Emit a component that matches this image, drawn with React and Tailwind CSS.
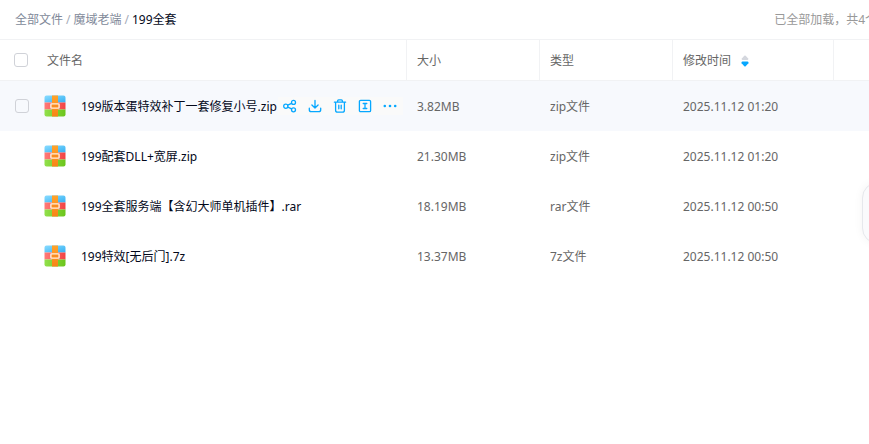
import React from "react";
import clsx from "clsx";

const files = [
  { name: "199版本蛋特效补丁一套修复小号.zip", size: "3.82MB", type: "zip文件", time: "2025.11.12 01:20", active: true },
  { name: "199配套DLL+宽屏.zip", size: "21.30MB", type: "zip文件", time: "2025.11.12 01:20" },
  { name: "199全套服务端【含幻大师单机插件】.rar", size: "18.19MB", type: "rar文件", time: "2025.11.12 00:50" },
  { name: "199特效[无后门].7z", size: "13.37MB", type: "7z文件", time: "2025.11.12 00:50" },
];

const actions = [
  { label: "分享", Icon: ShareIcon },
  { label: "下载", Icon: DownloadIcon },
  { label: "删除", Icon: TrashIcon },
  { label: "重命名", Icon: RenameIcon },
  { label: "更多", Icon: MoreIcon },
];

export default function App() {
  return (
    <div className="relative min-h-screen overflow-hidden bg-white font-['Noto_Sans','Noto_Sans_CJK_SC',sans-serif] text-xs">
      <header className="flex h-10 items-center justify-between border-b border-[#f1f2f4] pl-[15px]">
        <nav className="flex items-center gap-[3px] whitespace-nowrap text-[#818999]">
          <a href="#all">全部文件</a>
          <span className="text-[#a5abb8]">/</span>
          <a href="#parent">魔域老端</a>
          <span className="text-[#a5abb8]">/</span>
          <span className="text-[#03081a]">199全套</span>
        </nav>
        <span className="-mr-2 whitespace-nowrap text-[#999]">已全部加载，共4个</span>
      </header>

      <table className="w-full table-fixed border-separate border-spacing-0 text-left text-[#666]">
        <colgroup>
          <col />
          <col className="w-[133px]" />
          <col className="w-[133px]" />
          <col className="w-[161px]" />
          <col className="w-[35px]" />
        </colgroup>
        <thead>
          <tr className="h-[41px]">
            <th className="border-r border-b border-[#f1f2f4] pl-[14px] font-normal">
              <div className="flex items-center gap-[19px]">
                <Checkbox label="全选" />
                <span className="pt-0.5">文件名</span>
              </div>
            </th>
            <th className="border-r border-b border-[#f1f2f4] pt-0.5 pl-[10px] font-normal">大小</th>
            <th className="border-r border-b border-[#f1f2f4] pt-0.5 pl-[10px] font-normal">类型</th>
            <th className="border-r border-b border-[#f1f2f4] pt-0.5 pl-[10px] font-normal">
              <button type="button" className="flex items-center gap-[10px]">
                修改时间
                <SortIcon />
              </button>
            </th>
            <th className="border-b border-[#f1f2f4]" />
          </tr>
        </thead>
        <tbody>
          {files.map((file) => (
            <FileRow key={file.name} file={file} />
          ))}
        </tbody>
      </table>

      <aside className="absolute top-[182px] -right-10 h-[62px] w-[47px] rounded-2xl border border-[#e6e8ec] bg-[#fafafc] shadow-[0_0_10px_rgba(0,0,0,0.05)]" />
    </div>
  );
}

function FileRow({ file }) {
  return (
    <tr className={clsx("h-[50px]", file.active && "bg-[#f7f9fd]")}>
      <td className="pl-[15px]">
        <div className="flex items-center whitespace-nowrap">
          <Checkbox label={file.name} className={file.active ? "" : "invisible"} />
          <ArchiveIcon />
          <a href="#file" className="ml-[15px] pt-0.5 text-[#03081a]">{file.name}</a>
          {file.active && (
            <div className="ml-px flex bg-[#fafafa]">
              {actions.map(({ label, Icon }) => (
                <button key={label} type="button" aria-label={label} className="flex h-[18px] w-[25px] items-center justify-center text-[#06a7ff]">
                  <Icon />
                </button>
              ))}
            </div>
          )}
        </div>
      </td>
      <td className="pt-0.5 pl-[10px]">{file.size}</td>
      <td className="pt-0.5 pl-[10px]">{file.type}</td>
      <td className="pt-0.5 pl-[10px]">{file.time}</td>
      <td />
    </tr>
  );
}

function Checkbox({ label, className }) {
  return <input type="checkbox" aria-label={label} className={clsx("size-[14px] shrink-0 appearance-none rounded-[3px] border border-[#d0d2d8]", className)} />;
}

function ArchiveIcon() {
  return (
    <svg className="ml-[15px] size-[22px] shrink-0" viewBox="0 0 22 22">
      <defs>
        <linearGradient id="blue" x1="0" x2="1" y1="0" y2="1"><stop stopColor="#8bdcff" /><stop offset="1" stopColor="#34b0f2" /></linearGradient>
        <linearGradient id="red" x1="0" x2="1"><stop stopColor="#ff7a78" /><stop offset="1" stopColor="#f24545" /></linearGradient>
        <linearGradient id="green" x1="0" x2="1"><stop stopColor="#92e04b" /><stop offset="1" stopColor="#6cc51c" /></linearGradient>
        <linearGradient id="orange" x1="0" x2="0" y1="0" y2="1"><stop stopColor="#ffa32b" /><stop offset="1" stopColor="#f88416" /></linearGradient>
      </defs>
      <path fill="url(#blue)" d="M2.5 0.5h17a2 2 0 0 1 2 2v5h-21v-5a2 2 0 0 1 2-2z" />
      <path fill="url(#red)" d="M0.5 7.5h21v7h-21z" />
      <path fill="url(#green)" d="M0.5 14.5h21v5a2 2 0 0 1-2 2h-17a2 2 0 0 1-2-2z" />
      <path fill="url(#orange)" d="M8 0.5h6v21h-6z" />
      <rect x="6.9" y="8.9" width="8.2" height="4.2" rx="0.5" fill="#f98c20" stroke="#ffefdc" strokeWidth="1.4" />
    </svg>
  );
}

function SortIcon() {
  return (
    <svg width="8" height="12" viewBox="0 0 8 12">
      <path fill="#d4d7de" d="M3.3 0.8a1 1 0 0 1 1.4 0L6.7 3a1 1 0 0 1-.7 2H2a1 1 0 0 1-.7-2z" />
      <path fill="#06a7ff" d="M3.3 11.2a1 1 0 0 0 1.4 0L6.7 9a1 1 0 0 0-.7-2.4H2A1 1 0 0 0 1.3 9z" />
    </svg>
  );
}

function ActionSvg({ children }) {
  return (
    <svg width="14" height="14" viewBox="0 0 14 14" fill="none" stroke="currentColor" strokeWidth="1.3" strokeLinecap="round" strokeLinejoin="round">
      {children}
    </svg>
  );
}

function ShareIcon() {
  return (
    <ActionSvg>
      <circle cx="2.8" cy="7.2" r="2.1" />
      <circle cx="10.5" cy="3.4" r="2" />
      <circle cx="10.5" cy="10.8" r="2" />
      <path d="M4.8 6.2l3.8-1.9M4.8 8.2l3.8 1.7" />
    </ActionSvg>
  );
}

function DownloadIcon() {
  return (
    <ActionSvg>
      <path d="M7 1.5v7.2M3.9 6L7 9l3.1-3M1.3 9.2v1.5a2 2 0 0 0 2 2h7.4a2 2 0 0 0 2-2V9.2" />
    </ActionSvg>
  );
}

function TrashIcon() {
  return (
    <ActionSvg>
      <path d="M1.4 3.2h11.2M4.6 3V1.9a1 1 0 0 1 1-1h2.8a1 1 0 0 1 1 1V3M2.6 3.4v7.8a2 2 0 0 0 2 2h4.8a2 2 0 0 0 2-2V3.4M5.8 6.2v3.6M8.2 6.2v3.6" />
    </ActionSvg>
  );
}

function RenameIcon() {
  return (
    <ActionSvg>
      <rect x="1.4" y="1.4" width="11.2" height="11.2" rx="1.2" />
      <path d="M5.2 4.5h3.6M5.2 9.5h3.6M7 4.5v5" />
    </ActionSvg>
  );
}

function MoreIcon() {
  return (
    <svg width="14" height="14" viewBox="0 0 14 14" fill="currentColor">
      <circle cx="1.8" cy="7" r="1.3" />
      <circle cx="7" cy="7" r="1.3" />
      <circle cx="12.2" cy="7" r="1.3" />
    </svg>
  );
}
